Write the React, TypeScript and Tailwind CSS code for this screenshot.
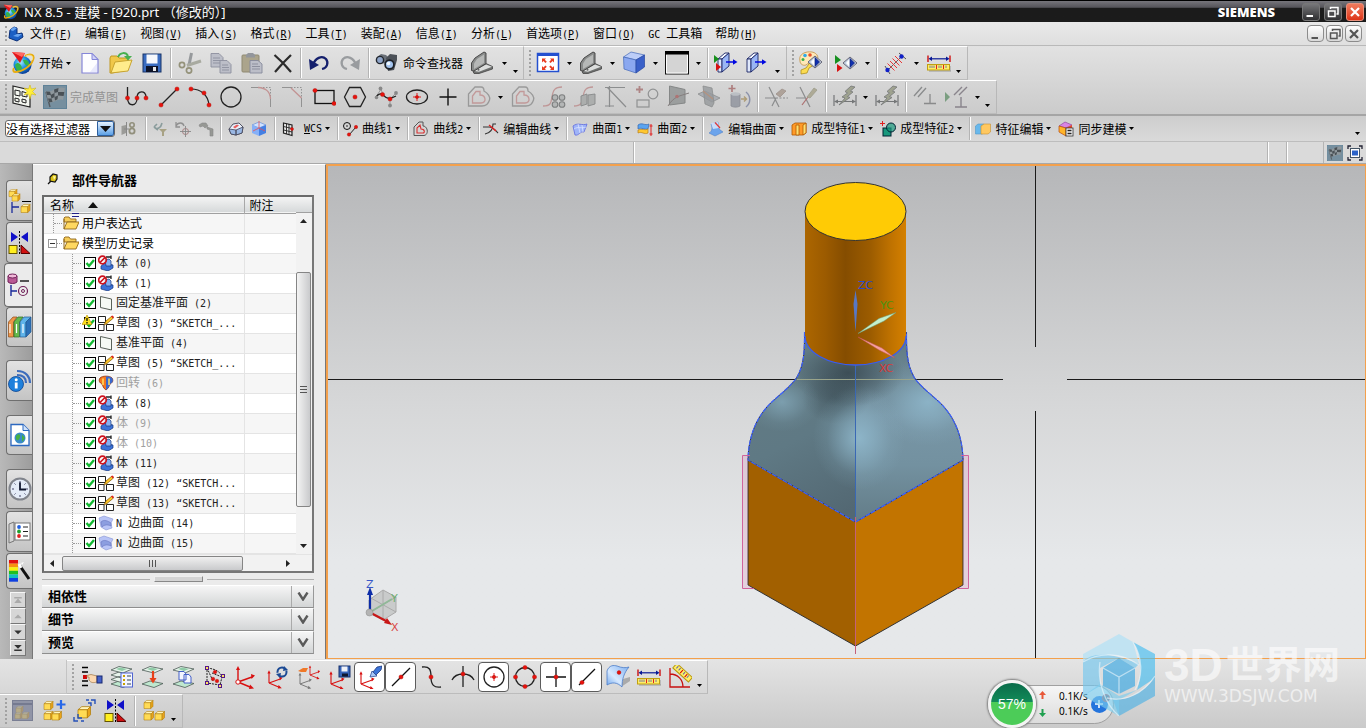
import React from "react";
import type { ReactNode } from "react";

/* ---------- text ---------- */

function Txt({ children }: { children: string }) {
  const parts = children.split(/([\x20-\x7e“]+)/).filter((p) => p !== "");
  return (
    <span className="whitespace-pre">
      {parts.map((p, i) =>
        /^[\x20-\x7e“]+$/.test(p) ? (
          <span key={i} className="font-['DejaVu_Sans_Mono',monospace] text-[10px]">
            {p}
          </span>
        ) : (
          p
        )
      )}
    </span>
  );
}

/* ---------- drawing helpers ---------- */

const R = ({ x, y, r = 2.1 }: { x: number; y: number; r?: number }) => (
  <circle cx={x} cy={y} r={r} fill="#e8120c" stroke="#a80d08" strokeWidth={0.4} />
);

const Cube = ({ x, y, s = 1 }: { x: number; y: number; s?: number }) => (
  <g transform={`translate(${x} ${y}) scale(${s})`} stroke="#b07c08" strokeWidth={0.6} strokeLinejoin="round">
    <path d="M0 3 L3 0.5 H10 L7.5 3 Z" fill="#fff6bc" />
    <path d="M0 3 H7.5 V9.5 H0 Z" fill="#ffdb55" />
    <path d="M7.5 3 L10 0.5 V7 L7.5 9.5 Z" fill="#eaa41a" />
  </g>
);

const Ruler = () => (
  <>
    <path d="M1 4.5 V11 M23 4.5 V11" stroke="#c00" strokeWidth={1.3} />
    <path d="M3 7.8 H21" stroke="#0a1a96" strokeWidth={1.2} />
    <path d="M1.5 7.8 L5 5.5 V10 Z M22.5 7.8 L19 5.5 V10 Z" fill="#0a1a96" />
    <path d="M2 20 H24 V15" stroke="#999" fill="none" />
    <rect x={0.5} y={13.5} width={22} height={5.5} fill="#ffee66" stroke="#c0a010" />
    <path d="M3 14.5 V17 M5 14.5 V17 M7 14.5 V17 M12 14.5 V17 M14 14.5 V17 M19 14.5 V17" stroke="#66a" strokeWidth={0.9} />
    <path d="M9.5 14 V18 M16.5 14 V18" stroke="#e02020" />
  </>
);

const Datum = () => (
  <g strokeLinejoin="round">
    <path d="M3 20.5 L16 12.5 L22.5 15.5 V18 L9 22.5 H4 Z" fill="#6f7170" stroke="#444" strokeWidth={0.8} />
    <path d="M4 20 L16 13.5 L22 15.8 L9 20.8 Z" fill="#dcdedd" />
    <path d="M1.5 19.5 V12 L5 7 L14 1 L16 2 V12.5 L4 20 Z" fill="#8a8c8b" stroke="#3d3d3d" strokeWidth={0.9} />
    <path d="M4 12.5 L7 8 L14 3.5 V12 L4 18 Z" fill="#b6b8b7" />
    <circle cx={8.5} cy={18.8} r={1} fill="#666" />
  </g>
);

const BlueBox = ({ x = 0 }: { x?: number }) => (
  <g transform={`translate(${x} 0)`} stroke="#1a2464" strokeWidth={0.9} strokeLinejoin="round">
    <path d="M1 8 L8 2 H12 L5 8 Z" fill="#f4f8ff" />
    <path d="M1 8 H5 V21 H1 Z" fill="#dfe8fb" />
    <path d="M5 8 L12 2 V15 L5 21 Z" fill="#9ab6f4" />
    <path d="M9 11 H17" stroke="#0008e0" strokeWidth={1.5} />
    <path d="M16 8.3 L20.5 11 L16 13.7 Z" fill="#0008e0" stroke="none" />
  </g>
);

const Axes = ({ x, y, s = 1, c = "#d81010" }: { x: number; y: number; s?: number; c?: string }) => (
  <g transform={`translate(${x} ${y}) scale(${s})`} stroke={c} fill={c} strokeWidth={1.4}>
    <path d="M0 0 V-13 M0 0 L14 -5 M0 0 L12 5" fill="none" />
    <path d="M-2 -12 H2 L0 -16 Z M13 -8 L17 -6.5 L13.5 -3 Z M12 2.5 L16 6.5 L11 7 Z" stroke="none" />
  </g>
);

const Layers = ({ mid }: { mid?: boolean }) => (
  <g stroke="#4d5a55" strokeLinejoin="round" strokeWidth={0.8}>
    <path d="M1 19 L9 16 L22 18.5 L13 22.5 Z" fill="#bfe8cf" />
    {mid && <path d="M1 14.5 L9 11.5 L22 14 L13 18 Z M1 10 L9 7 L22 9.5 L13 13.5 Z" fill="#e8f4ec" />}
    <path d="M1 5 L9 1.5 L22 4 L13 8 Z" fill="#e5f4ea" />
    <path d="M6 4 L10 2.5 L17 4 L12 6 Z" fill="#8fcba6" stroke="none" />
  </g>
);

const Mirror = () => (
  <>
    <path d="M3 1 L10 6 L3 11 Z M20 1 L13 6 L20 11 Z" fill="#1010c8" />
    <path d="M11.5 0 V24" stroke="#000" strokeDasharray="2 1.5" />
    <rect x={1} y={14.5} width={8} height={8} fill="#ffef20" stroke="#665500" />
    <path d="M13 14 L22 22.5 H13 Z" fill="#d01010" stroke="#500" />
  </>
);

const Flag = () => (
  <>
    <rect x={0.5} y={0.5} width={23} height={23} fill="#768f9f" stroke="#5f8298" />
    <path d="M3 7 L7 22" stroke="#555b60" strokeWidth={1.4} />
    <path d="M2.5 6 C8 9 13 0 22 3 L20 15 C14 13 11 19 5.5 17 Z" fill="#8e979c" />
    <path d="M3 6.5 L7 6.8 L8 10 L4 10 Z M11 4.5 L15.5 3 L15 7 L11.5 8 Z M7.500 10 L11.500 8 L11.500 12 L8.500 13.500 Z M15 7 L21.300 7 L20.600 11 L15 10.500 Z M5 13.500 L8.500 13.500 L9.500 17 L6 17.200 Z M11.500 12 L15 10.500 L14.500 14.300 L12 15.500 Z" fill="#4a5156" />
  </>
);

const Nx = () => (
  <>
    <defs>
      <radialGradient id="nxGlobe" cx="40%" cy="35%" r="70%">
        <stop offset="0" stopColor="#9be8ff" />
        <stop offset="0.5" stopColor="#1c8fe0" />
        <stop offset="1" stopColor="#07308c" />
      </radialGradient>
    </defs>
    <circle cx={11.5} cy={14} r={9} fill="url(#nxGlobe)" />
    <path d="M4 14 C7 10 10 13 11 17 C9 21 7 22 6 20 Z M12 9 C16 8 19 11 18 15 C15 15 13 13 12 9 Z" fill="#35b34a" />
    <path d="M1 1 L14 2 L9 12 Z" fill="#e3161c" />
    <path d="M1 1 L14 2 L11 6 Z" fill="#ff6a62" />
    <path d="M14 5 C20 2 24 4 22 9 C20 15 11 21 4 21 C2 21 2 19 3 17" fill="none" stroke="#e7ac12" strokeWidth={2} />
    <path d="M15 5 C20 3 23 5 21 9" fill="none" stroke="#fff2a0" strokeWidth={0.8} />
  </>
);

const Constraint = () => (
  <g stroke="#66686a" fill="none" strokeWidth={1.2}>
    <path d="M1 10 V21 M23 10 V21 M2 16.500 H22" />
    <path d="M1 16.500 L5 14.500 V18.500 Z M23 16.500 L19 14.500 V18.500 Z" fill="#66686a" stroke="none" />
    <path d="M18 1 L12 6.500 L14.500 8 L9 12 L12 13 L6 20 L17 12.500 L14.500 11.500 L20 7 L17.500 6 L22 2 Z" fill="#969a84" strokeWidth={0.8} />
  </g>
);

const DiamondEye = ({ x, y }: { x: number; y: number }) => (
  <g transform={`translate(${x} ${y})`}>
    <path d="M0 7 L7 1 L14 7 L7 13 Z" fill="#c4d0e0" stroke="#667" />
    <path d="M3 7 L7 2.5 V11.5 Z" fill="#fff" />
    <path d="M7 2.5 L11.5 7 L7 11.5 Z" fill="#1030b0" stroke="#0a1c70" strokeWidth={0.7} />
  </g>
);

const art: Record<string, ReactNode> = {
  nx: <Nx />,
  newDoc: (
    <>
      <path d="M4 2.5 H14 L20 8.5 V22 H4 Z" fill="#fdfdff" stroke="#8586d8" strokeWidth={1.2} />
      <path d="M14 2.5 V8.5 H20 Z" fill="#d0d2f6" stroke="#8586d8" />
      <path d="M12 21 H19 V12 Z" fill="#e8e9fc" />
    </>
  ),
  open: (
    <>
      <path d="M1 7 L2 5 H8 L10 7 H19 V19 L3 22 H1 Z" fill="#f0c84a" stroke="#c09820" />
      <path d="M2 22 L6 11 L23 9 L19 20 Z" fill="#ffec8c" stroke="#c8a430" />
      <path d="M9 6 C11 1 17 1 19 5" fill="none" stroke="#48b050" strokeWidth={2} />
      <path d="M15 5 H23 L19 9.500 Z" fill="#48b050" />
    </>
  ),
  save: (
    <>
      <rect x={3} y={3} width={18} height={18} fill="#3a6cc0" stroke="#183468" />
      <rect x={6.5} y={3.5} width={11} height={9} fill="#f6f8fc" />
      <rect x={6} y={15} width={12} height={6} fill="#0d1328" />
      <rect x={13} y={16} width={3} height={4} fill="#e8e8e8" />
    </>
  ),
  cut: (
    <g fill="none">
      <path d="M13.500 2 L11 14" stroke="#96999c" strokeWidth={3} />
      <path d="M23 10 L9 14.500" stroke="#a8aaa0" strokeWidth={3} />
      <circle cx={4} cy={14} r={2.600} stroke="#94927a" strokeWidth={1.700} />
      <circle cx={11} cy={19.5} r={2.600} stroke="#94927a" strokeWidth={1.700} />
    </g>
  ),
  copy: (
    <g fill="#bcbec8" stroke="#8d909e" strokeWidth={0.9}>
      <path d="M2 2.5 H10 L14 6.5 V16 H2 Z" />
      <path d="M4 7 H11 M4 9.5 H11 M4 12 H11" />
      <path d="M11 9.5 H18 L22 13.5 V22 H11 Z" />
      <path d="M13 14 H19 M13 16.5 H20 M13 19 H20" />
    </g>
  ),
  paste: (
    <>
      <rect x={2} y={4} width={17} height={17} rx={1} fill="#aba48c" stroke="#8f8972" />
      <path d="M6 6.5 V4 L8 2 H13 L15 4 V6.5 Z" fill="#93969c" />
      <path d="M10 9.5 H18 L22 13 V22 H10 Z" fill="#bcbec8" stroke="#878a9c" strokeWidth={0.9} />
      <path d="M12 13 H18 M12 15.5 H20 M12 18 H20" stroke="#8d909e" />
    </>
  ),
  del: <path d="M3.500 4 L12 12 L20 21 M20 4 L12 12 L4 21" stroke="#2b2b2b" strokeWidth={2.2} fill="none" />,
  undo: (
    <>
      <path d="M6 14 C8 7 15 4 19 8 C22 12 20 17 15 18" fill="none" stroke="#141f6c" strokeWidth={2.2} />
      <path d="M2 8 L3 19 L12 14 Z" fill="#141f6c" />
    </>
  ),
  redo: (
    <>
      <path d="M18 14 C16 7 9 4 5 8 C2 12 4 17 9 18" fill="none" stroke="#999c9f" strokeWidth={2.2} />
      <path d="M22 8 L21 19 L12 14 Z" fill="#999c9f" />
    </>
  ),
  finder: (
    <>
      <path d="M1 7 L6 3 L11 4 L14 7 L12 12 L4 13 Z" fill="#6a7078" />
      <path d="M11 7 L15 3 L22 4 L22 9 L19 19 L13 20 Z" fill="#4c5158" />
      <circle cx={5} cy={9} r={3.6} fill="#8ea4c8" stroke="#22262c" strokeWidth={1.4} />
      <circle cx={14.5} cy={13.500} r={4.4} fill="#a4c4ee" stroke="#1c2026" strokeWidth={1.7} />
      <circle cx={13.5} cy={12.500} r={1.8} fill="#f0f8ff" />
    </>
  ),
  datum: <Datum />,
  fit: (
    <>
      <rect x={1.5} y={2.5} width={21} height={18} fill="#fff" stroke="#2450d0" strokeWidth={1.5} />
      <rect x={1} y={2} width={22} height={3} fill="#2450d0" />
      <g fill="#e83c20">
        <path d="M6 7.500 H10 L8.800 8.700 L10.800 10.700 L9.400 12 L7.400 10 L6 11.500 Z" />
        <path d="M18 7.500 H14 L15.200 8.700 L13.200 10.700 L14.600 12 L16.600 10 L18 11.500 Z" />
        <path d="M6 19 H10 L8.800 17.800 L10.800 15.800 L9.400 14.500 L7.400 16.500 L6 15 Z" />
        <path d="M18 19 H14 L15.200 17.800 L13.200 15.800 L14.600 14.500 L16.600 16.500 L18 15 Z" />
      </g>
    </>
  ),
  cube: (
    <g strokeLinejoin="round">
      <path d="M1.500 6 L9 1 L22.500 4 L14 9 Z" fill="#bccdf8" stroke="#4468b8" strokeWidth={0.700} />
      <path d="M1.500 6 L14 9 V22 L2 18 Z" fill="#8ba8f0" stroke="#4468b8" strokeWidth={0.700} />
      <path d="M14 9 L22.500 4 V16 L14 22 Z" fill="#3a60c8" stroke="#2848a0" strokeWidth={0.700} />
    </g>
  ),
  square: (
    <>
      <rect x={0.5} y={1} width={23} height={22} fill="#d4d4d4" stroke="#111" />
      <rect x={0} y={0} width={24} height={3.5} fill="#000" />
      <path d="M1.5 4 V22 H22.5 V4" stroke="#fff" fill="none" />
    </>
  ),
  boxMark: (
    <>
      <BlueBox x={3} />
      <path d="M0 4 L5 8 L0 12 Z" fill="#18901c" />
      <path d="M2 12 L7 16 L2 20 Z" fill="#d81010" />
    </>
  ),
  box: <BlueBox x={1} />,
  palette: (
    <>
      <path d="M2 10 C0 3 8 0 14 1 C20 2 22 8 17 11 C13 13 11 11 8 14 C5 15 2 13 2 10 Z" fill="#ffe8b8" stroke="#c89850" strokeWidth={0.900} />
      <circle cx={7} cy={4.5} r={1.8} fill="#2fa8e8" />
      <circle cx={12} cy={4} r={1.8} fill="#e85028" />
      <circle cx={5} cy={8.5} r={1.5} fill="#3ab04a" />
      <path d="M13 10 L8 17 L3 19 V23 L9 22 L11 17 L16 14 Z" fill="#fcdc50" stroke="#b09020" strokeWidth={0.800} />
      <DiamondEye x={10} y={4} />
    </>
  ),
  eye: (
    <>
      <path d="M1 4 L7 9 L1 13 Z" fill="#189020" />
      <path d="M3 13 L8.5 17 L3 21 Z" fill="#d81010" />
      <DiamondEye x={9} y={5} />
    </>
  ),
  measureCurve: (
    <>
      <path d="M4 20 L20 4" stroke="#444" strokeWidth={0.8} />
      <path d="M4.500 12.500 L11.500 19.500 M7 10 L14 17 M9.500 7.500 L16.500 14.500 M12 5 L19 12" stroke="#e83838" strokeWidth={1} />
      <path d="M2 15 L7 23 M16 2 L23 8" stroke="#444" strokeWidth={0.9} />
      <circle cx={4.500} cy={19} r={2.2} fill="#1020c8" />
      <circle cx={18.5} cy={5.5} r={2.2} fill="#1020c8" />
    </>
  ),
  ruler: <Ruler />,

  sketch: (
    <>
      <path d="M1 1 L18 5 V22 L1 18 Z" fill="#f4f6f0" stroke="#222" strokeWidth={1.2} />
      <path d="M3 5 L8 6 V11 L3 10 Z M10 6.5 L15 8 V12 L10 11 Z M3 13 L7 14 V17 L3 16 Z M10 14 L14 15 V18 L10 17 Z" fill="none" stroke="#222" />
      <path d="M18 0 L19.3 4 L24 3 L20.5 6.5 L24 10 L19.5 9 L18 14 L16.5 9 L12 10 L15 6.5 L12 3 L16.5 4 Z" fill="#ffee3a" stroke="#c8b010" strokeWidth={0.5} />
    </>
  ),
  flag: <Flag />,
  profile: (
    <>
      <path d="M2.500 2 V13 C3 22 12 22 12 13 C12 5 21 5 21 12 V13" stroke="#222" fill="none" strokeWidth={1.3} />
      <R x={2.5} y={13} /><R x={12} y={13} /><R x={21} y={13} />
    </>
  ),
  line: (<><path d="M4 20 L20 4" stroke="#222" strokeWidth={1.2} /><R x={4} y={20} /><R x={20} y={4} /></>),
  arc: (<><path d="M3 4 C13 4 20 10 21 20" stroke="#222" fill="none" strokeWidth={1.2} /><R x={3} y={4} /><R x={16} y={8} /><R x={21} y={20} /></>),
  circle: <circle cx={12} cy={12} r={10} fill="none" stroke="#222" strokeWidth={1.3} />,
  fillet: (<><path d="M10 2.500 H20.500 V12" stroke="#888" fill="none" strokeDasharray="1.5 1.5" /><path d="M1 2.500 H10 M20.500 12 V22" stroke="#888" /><path d="M8 2.500 C16 3 20 6 20.500 14" stroke="#c08888" fill="none" strokeWidth={1.3} /></>),
  chamfer: (<><path d="M10 2.500 H20.500 V13" stroke="#888" fill="none" strokeDasharray="1.5 1.5" /><path d="M1 2.500 H10 M20.500 13 V22" stroke="#888" /><path d="M10 3 L20.500 13" stroke="#c08888" strokeWidth={1.3} /></>),
  rect: (<><rect x={3} y={5.500} width={19} height={13} fill="none" stroke="#111" strokeWidth={1.3} /><R x={3} y={5.500} /><R x={22} y={18.500} /></>),
  hex: (<><path d="M1.500 12 L6.5 2.5 H17.5 L22.500 12 L17.5 21.5 H6.5 Z" fill="none" stroke="#222" strokeWidth={1.3} /><R x={12} y={12} /></>),
  spline: (
    <>
      <path d="M2 12 L7 4 L9 10 M16 14 L22 8 M16 14 V21" stroke="#999" fill="none" />
      <path d="M2 12 C4 9 7 8 9 10 C12 13 15 15 22 11" fill="none" stroke="#222" strokeWidth={1.2} />
      <circle cx={6.5} cy={3.5} r={1.9} fill="#888" /><circle cx={2.5} cy={12.5} r={1.8} fill="#888" /><circle cx={22} cy={8} r={1.9} fill="#888" /><circle cx={16} cy={20.5} r={1.9} fill="#888" />
      <R x={8.500} y={9.500} /><R x={16} y={14} />
    </>
  ),
  ellipse: (<><ellipse cx={12} cy={12} rx={10.5} ry={7} fill="none" stroke="#222" strokeWidth={1.3} /><path d="M12 8 V16 M8 12 H16" stroke="#e02020" /><R x={12} y={12} r={1.6} /></>),
  plus: <path d="M12 3.500 V20.500 M3.500 12 H20.500" stroke="#111" strokeWidth={1.4} />,
  offset: (
    <g fill="none" strokeWidth={1.3}>
      <path d="M1.5 21 V9 L8 2 H14 C17 2 17 4 17 6 C21 8 23.500 12 22.500 15 C21 20 18 21 15 21 Z" stroke="#909090" />
      <path d="M5.500 18 V11 L9 6.500 H13 V10 C19 10 20 18 14 18 Z" stroke="#c09090" />
    </g>
  ),
  pattern: (
    <g fill="#b0b2b2" stroke="#6f7172" strokeWidth={1.1}>
      <path d="M1 21 C9 21 9 18 10 12 C11 5 13 2 20 2" fill="none" stroke="#bd8d8d" strokeWidth={1.300} />
      <circle cx={13} cy={12.500} r={2.8} /><circle cx={20} cy={12.500} r={2.8} /><circle cx={13} cy={19.500} r={2.8} /><circle cx={20} cy={19.500} r={2.8} />
    </g>
  ),
  mirrorCurve: (
    <g fill="#a6a9a8" stroke="#7a7d7e" strokeWidth={0.900}>
      <path d="M1 21 C8 21 9 18 10 12 C11 5 13 2 20 2" fill="none" stroke="#bd8d8d" strokeWidth={1.3} />
      <path d="M8 11 L14 9 V19 L8 21 Z M15 10 L22 9 V19 L15 21 Z" />
    </g>
  ),
  intersect: <path d="M1 2.500 H21 M5.500 1 V22 M1 21 H10 M3.500 2.500 L22 22" fill="none" stroke="#808283" strokeWidth={1.2} />,
  derive: (
    <g fill="none" strokeWidth={1.2} stroke="#858788">
      <path d="M4.500 1 V8 M1 4.5 H8" stroke="#a87878" strokeWidth={1.8} />
      <circle cx={18} cy={9} r={4.8} /><rect x={2} y={15} width={12} height={7} />
    </g>
  ),
  plane: (<><path d="M3.500 1 L19 4.500 V18 L3.500 20 Z" fill="#939696" stroke="#787b7b" /><path d="M2 21 C8 11 14 11 23 8" stroke="#787070" fill="none" strokeWidth={1} /><circle cx={11} cy={11.5} r={1.800} fill="#a86464" /></>),
  planes: (<g stroke="#808383" strokeWidth={0.8}><path d="M1 9 L8 6 L23 13 L15 17 Z" fill="#a6aab0" /><path d="M6 1 L15 3 L17 18 L15 22 L8 19 Z" fill="#8c9094" fillOpacity={0.800} /><path d="M6 6 L16 14" stroke="#b08870" strokeWidth={1.3} /></g>),
  project: (
    <g>
      <path d="M4 0 V7 M0.500 3.500 H7.500" stroke="#a87070" strokeWidth={1.700} />
      <path d="M3 9 H12 V21 C10 22.500 5 22.500 3 21 Z" fill="#9296a0" stroke="#80838c" strokeWidth={0.800} />
      <ellipse cx={7.500} cy={9} rx={4.500} ry={1.800} fill="#b8bcc2" />
      <path d="M13 14 H18 M16 11.500 L18.500 14 L16 16.500" stroke="#a89468" fill="none" strokeWidth={1.4} /><path d="M18 7 C23 11 23 18 18 22" fill="none" stroke="#8088a4" strokeWidth={1.5} />
    </g>
  ),
  trim: (<g stroke="#808283" strokeWidth={1.2}><path d="M1 13 H12 M5 2 L15 22 M8 21 L12 13" fill="none" /><path d="M12 13 H24" strokeDasharray="2 1.5" /><path d="M12 9 L18 4 L22 6 L16 12 Z" fill="#a89a90" stroke="#968880" strokeWidth={0.8} /></g>),
  extend: (<g stroke="#808283" strokeWidth={1.2}><path d="M1 13 H11 M5 2 L15 22" fill="none" /><path d="M7 20 L13 12" stroke="#a86060" /><path d="M12 12 L19 3 L22 5 L15 13 Z" fill="#a8a48c" stroke="#949480" strokeWidth={0.8} /></g>),
  constraint: <Constraint />,
  parallel: <path d="M1 11 L9 2 M5 12 L13 3 M11 18.500 H23 M17 18.500 V9" stroke="#7d7f80" strokeWidth={1.3} />,
  parallelAuto: (<><path d="M1 7 L6 12 L1 17 Z" fill="#6d9674" /><path d="M10 10 L18 2 M15 10 L23 2 M11 22 H23 M17 22 V12" stroke="#7d7780" strokeWidth={1.4} /></>),

  wcsList: (
    <>
      <path d="M3 2.5 H9 M3 7 H9 M3 16 H9 M3 20.5 H9" stroke="#000" strokeWidth={1.700} />
      <rect x={4} y={10} width={4} height={4} fill="#d00808" />
      <path d="M8 10.500 L12 9.5 L18 11 V17 C14 18 12 18 10 15 V12 H8 Z" fill="#fcd8b0" stroke="#a88050" strokeWidth={0.8} />
      <rect x={18} y={11} width={5} height={7} fill="#4460c8" stroke="#182870" />
    </>
  ),
  layerList: (<><Layers mid /><rect x={11} y={8} width={11.5} height={14} fill="#f4f6ff" stroke="#5064d0" /><path d="M13 11 H15 M13 15 H15 M13 19 H15" stroke="#c8a000" strokeWidth={2} /><path d="M17 11 H21 M17 15 H21 M17 19 H21" stroke="#345" /></>),
  layerMove: (<><Layers /><path d="M12 6 V15" stroke="#e84018" strokeWidth={2.2} /><path d="M8.5 13 H15.5 L12 18.5 Z" fill="#e84018" /></>),
  layerCopy: (<><Layers /><path d="M7 6.5 H12 L14 9 V15 H7 Z M12 9.5 H17 L19 12 V18 H12 Z" fill="#f4f6ff" stroke="#4460c8" /></>),
  transform: (
    <>
      <path d="M4 3 C14 4 18 8 19 12 L17 20 L4 18 Z M4 3 L10 16 M19 12 L9 8" fill="none" stroke="#222" strokeDasharray="2 1" />
      {[[4, 3], [20, 11], [4, 18], [17, 21]].map(([a, b]) => <rect key={`${a}-${b}`} x={a - 1.5} y={b - 1.5} width={3} height={3} fill="#ffe060" stroke="#551888" />)}
      <R x={12} y={7} r={1.8} /><R x={10} y={14} r={1.8} /><R x={14} y={16} r={1.8} />
    </>
  ),
  csys: (<><Axes x={4} y={17} /><circle cx={4} cy={17} r={2.2} fill="#fff" stroke="#d81010" /></>),
  csysRotate: (<><Axes x={4} y={18} s={0.8} /><circle cx={17} cy={7} r={4.5} fill="none" stroke="#1c4a94" strokeWidth={2} strokeDasharray="10 3" /><path d="M19 1 L23 5 L18 6 Z M15 13 L11 9 L16 8 Z" fill="#1c4a94" /></>),
  csysOrient: (<><Axes x={4} y={19} s={0.7} c="#777" /><Axes x={14} y={10} s={0.6} /><path d="M2 6 L7 3 H12 L10 7 H5 Z" fill="#f07828" /></>),
  csysSave: (<><Axes x={4} y={19} s={0.8} /><rect x={12} y={1} width={11} height={11} fill="#3764b8" stroke="#16306c" /><rect x={14.5} y={1.5} width={6} height={5} fill="#f0f2f8" /><rect x={15} y={8.5} width={6} height={3} fill="#101830" /></>),
  csysLight: (<><Axes x={3} y={19} s={0.8} /><path d="M15 7 L19 2 L24 1 L23 5 L18 10 Z" fill="#3c74d8" stroke="#102a70" strokeWidth={0.700} /><path d="M14 6 L19 11 L12 12 Z" fill="#a8c8f8" stroke="#203c88" strokeWidth={0.700} /></>),
  midLine: (<><path d="M3 21 L21 3" stroke="#111" strokeWidth={1.3} /><R x={12} y={12} /></>),
  ctrl: (<><path d="M2 2 C10 1 11 5 11 12 C11 20 14 23 21 22" fill="none" stroke="#222" strokeWidth={1.3} /><R x={11} y={12} /></>),
  tangent: (<><path d="M1 15 C5 7 19 7 23 15 M12 1 V22" fill="none" stroke="#222" strokeWidth={1.3} /><R x={12} y={9} /></>),
  center: (<><circle cx={12} cy={12} r={10} fill="none" stroke="#222" strokeWidth={1.3} /><path d="M12 8 V16 M8 12 H16" stroke="#e02020" /><R x={12} y={12} r={1.7} /></>),
  quadrant: (<><circle cx={12} cy={12} r={9.5} fill="none" stroke="#222" strokeWidth={1.3} /><R x={12} y={2.5} /><R x={12} y={21.5} /><R x={2.5} y={12} /><R x={21.5} y={12} /></>),
  point: (<><path d="M12 2 V22 M2 12 H22" stroke="#111" strokeWidth={1.3} /><R x={12} y={12} /></>),
  onCurve: (<><path d="M4 20 L20 4" stroke="#111" strokeWidth={1.3} /><R x={7} y={17.5} /></>),
  onFace: (
    <>
      <defs><linearGradient id="face" x1="0" x2="1" y1="1" y2="0"><stop offset="0" stopColor="#6ca4ec" /><stop offset="0.4" stopColor="#d8eaff" /><stop offset="1" stopColor="#80b0f0" /></linearGradient></defs>
      <path d="M15 22 L24 16 V12 L17 14 Z" fill="#aaa" />
      <path d="M1 6 C3 0 8 0 11 1 C16 3 20 3 23 2 C18 8 16 14 16 22 C11 17 6 17 1 20 Z" fill="url(#face)" stroke="#4c7cc8" strokeWidth={0.8} />
      <R x={13} y={7.500} r={1.900} />
    </>
  ),
  angle: (
    <>
      <path d="M2 3 V22 H22 M2 9 C10 9 15 15 15 22" fill="none" stroke="#c81010" strokeWidth={1.3} />
      <g transform="rotate(42 15 8)"><rect x={4} y={5} width={21} height={6} fill="#ffee66" stroke="#b89810" /><path d="M7 6 V9 M10 6 V9 M16 6 V9 M21 6 V9" stroke="#66a" /><path d="M13 6 V10 M19 6 V10" stroke="#d00" /></g>
    </>
  ),
  asmWin: (<><rect x={1.5} y={1.5} width={20} height={20} fill="#9094a6" stroke="#7a7f94" /><path d="M2 5 H21" stroke="#757a90" strokeWidth={2} /><g opacity={0.35}><Cube x={5} y={7} s={0.7} /><Cube x={4} y={13} s={0.7} /><Cube x={11} y={13} s={0.7} /></g></>),
  asmAdd: (<><Cube x={2} y={2} s={0.9} /><Cube x={2} y={12} s={0.9} /><Cube x={10} y={12} s={0.95} /><path d="M19 1 V10 M14.5 5.5 H23.5" stroke="#2868e8" strokeWidth={2.2} /></>),
  asmMove: (<><Cube x={5} y={7} s={1.25} /><path d="M15 4 L18 4 V7 M18 1 H22 V5 M13 1 H16 M1 18 V22 H5 M5 15 V19 H9 M8 22 H11" fill="none" stroke="#2450b8" strokeWidth={1.4} /></>),
  mirror: <Mirror />,
  asm: (<><Cube x={2} y={1} s={0.9} /><Cube x={2} y={12} s={0.95} /><Cube x={13} y={12} s={0.95} /></>),
  asmTree: (<><Cube x={1} y={0} s={0.8} /><Cube x={4} y={4.5} s={0.8} /><path d="M4 13 V24 M4 18 H11" stroke="#1a2a9a" strokeWidth={1.3} /><path d="M14 12.500 H23" stroke="#000" /><Cube x={13} y={15} s={0.9} /></>),
  partTree: (
    <>
      <path d="M1 3 V9 C3 11 8 11 10 9 V3" fill="#b85894" stroke="#702058" /><ellipse cx={5.5} cy={3} rx={4.5} ry={2} fill="#f0b8d8" stroke="#702058" />
      <path d="M13 8 H22" stroke="#000" strokeWidth={1.3} /><path d="M4 12 V23 M4 18 H10" stroke="#1a2a9a" strokeWidth={1.4} />
      <circle cx={16} cy={18} r={4.5} fill="none" stroke="#702058" strokeWidth={1.2} /><circle cx={16} cy={18} r={1.5} fill="none" stroke="#702058" />
    </>
  ),
  books: (
    <g strokeWidth={0.7}>
      <path d="M0.500 7 L5 2 H9 L5.500 7 V22 H0.500 Z" fill="#ee9648" stroke="#8c4a18" /><path d="M6 7 L10 2 H15 L11.500 7 V22 H6 Z" fill="#66b84c" stroke="#2c6c20" /><path d="M12 7 L16 2 H23 L18 7 V22 H12 Z" fill="#60b4ea" stroke="#225a90" /><path d="M18 7 L23 2 V17 L18 22 Z" fill="#2c70b8" stroke="#225a90" /><path d="M2 9 V18 M8.500 9 V18 M15 9 V18" stroke="#fff" strokeWidth={1.200} />
    </g>
  ),
  info: (
    <>
      <path d="M9 6 C15 6 18 9 18 14 M9 2 C18 2 22 8 22 14" fill="none" stroke="#3c6cbc" strokeWidth={2.2} />
      <circle cx={8} cy={15} r={7.5} fill="#1e80dc" stroke="#0c4490" strokeWidth={0.800} /><rect x={6.8} y={13.5} width={2.8} height={6} fill="#fff" /><circle cx={8.2} cy={10.8} r={1.5} fill="#fff" />
    </>
  ),
  web: (<><path d="M3 1.5 H15 L21 7.5 V22.5 H3 Z" fill="#fff" stroke="#2c68c0" strokeWidth={1.3} /><path d="M15 1.5 V7.5 H21" fill="#d0e2fa" stroke="#2c68c0" /><circle cx={12} cy={15} r={5.5} fill="#3a8ac8" /><path d="M8 13 C10 10 13 11 12 14 C11 18 9 18 8 16 Z M14 11.500 L17 15 L14 19 Z" fill="#45b044" /></>),
  clock: (<><circle cx={12} cy={12} r={10.5} fill="#e4ecf8" stroke="#80848c" strokeWidth={2} /><path d="M12 4 V6 M12 18 V20 M4 12 H6 M18 12 H20 M6.5 6.5 L7.5 7.5 M17.5 6.5 L16.5 7.5 M6.5 17.5 L7.5 16.5 M17.5 17.5 L16.5 16.5" stroke="#446" /><path d="M12 5.5 V12.5 H18" fill="none" stroke="#101830" strokeWidth={1.8} /></>),
  roles: (<><path d="M1 4 L6 2 V21 L1 23 Z" fill="#d4d4d4" stroke="#777" /><rect x={7} y={3} width={15} height={17} fill="#fff" stroke="#777" /><circle cx={11} cy={7} r={1.9} fill="#2060e0" /><circle cx={11} cy={11.5} r={1.9} fill="#20a030" /><circle cx={11} cy={16} r={1.9} fill="#e02020" /><path d="M15 7 H20 M15 11.5 H20 M15 16 H20" stroke="#222" /></>),
  wand: (
    <>
      {["#e01010", "#f89010", "#f8f010", "#20c020", "#10c0c0", "#1040e0"].map((c, i) => <rect key={c} x={1} y={1 + i * 3.6} width={9} height={3.7} fill={c} />)}
      <path d="M12 7 L21 20" stroke="#111" strokeWidth={3} /><path d="M11 5 L13 9" stroke="#fff" strokeWidth={3} /><path d="M12 1 L13 4 L16 3 L14 6 Z" fill="#fff" />
    </>
  ),
};

/* 16 px pictures */
const small: Record<string, ReactNode> = {
  cubeApp: (<><path d="M2 4 L6 1 L9 2 V8 L14 7 L15 11 L9 15 L1 12 Z" fill="#1b5fc4" stroke="#0a2f78" /><path d="M2 4 L6 1 L9 2 L5 5 Z M5 10 L9 8 L14 8 L10 11 Z" fill="#6ba6f0" /></>),
  filterChain: (<g><path d="M0.500 5 L5 4 V12 L0.500 14 Z" fill="#9b9b98" /><path d="M5.500 1 V15 M3 8 H8" stroke="#888" /><circle cx={11} cy={4} r={2.2} fill="none" stroke="#918f7c" strokeWidth={1.6} /><circle cx={11} cy={10} r={2.600} fill="none" stroke="#918f7c" strokeWidth={1.8} /></g>),
  filter1: (<><path d="M2 6 C5 9 9 7 10 2 M2 6 L6 9 M2 6 L5 3" stroke="#8a9c9c" strokeWidth={1.6} fill="none" /><path d="M7 8 H15 L12 11 V15 H10 V11 Z" fill="#a8a284" /></>),
  filter2: (<><path d="M1 5 C3 1 8 1 9 5 M1 1 V6 H5" stroke="#909090" strokeWidth={1.3} fill="none" /><circle cx={10.5} cy={10.5} r={3} fill="none" stroke="#a88080" /><path d="M10.5 5 V16 M5 10.5 H16" stroke="#888" strokeWidth={0.9} /></>),
  filter3: (<path d="M1 4 L4 2 L8 2 L10 5 L7 7 L5 5 L2 6 Z M9 6 L15 8 V15 L12 15 V9 L9 8 Z" fill="#969894" stroke="#888" strokeWidth={0.6} />),
  eraserBox: (<><path d="M1 8 L5 3 L11 2 L15 6 L14 12 L8 14 L3 13 Z" fill="#e8f0fa" stroke="#445" strokeWidth={0.9} /><path d="M1 8 L8 9 L8 14 L3 13 Z M8 9 L15 6 L14 12 L8 14 Z" fill="#9ab8e4" stroke="#445" strokeWidth={0.8} /><path d="M5 6 L9 3.500 L11 4.500 L7 7.500 Z" fill="#e86060" /></>),
  solidBox: (<><path d="M1 4 L8 1 L15 4 L8 7 Z" fill="#cfe2ff" stroke="#6890d8" strokeWidth={0.7} /><path d="M1 4 L8 7 V15 L1 12 Z" fill="#86b0f8" /><path d="M8 7 L15 4 V12 L8 15 Z" fill="#4480e4" /><path d="M8 0 V7 L14 10 M8 7 L2 10" stroke="#e85050" fill="none" strokeWidth={0.8} /></>),
  wcs: (<><path d="M2.500 2 L11 4 V14.500 L2.500 12 Z" fill="#e8e8e8" stroke="#222" strokeWidth={1.2} /><path d="M5.500 2.500 V13 M8 3 V14 M2.500 5.500 L11 7.500 M2.500 9 L11 11" stroke="#222" strokeWidth={0.9} /><R x={11} y={8} r={1.5} /></>),
  curve: (<><circle cx={5} cy={5} r={3.5} fill="none" stroke="#111" /><circle cx={5} cy={5} r={0.8} fill="#111" /><path d="M7 14 L14 6" stroke="#222" /><R x={7} y={13.5} r={1.7} /><R x={14} y={6} r={1.7} /></>),
  offset2: (<g fill="none"><path d="M1 14.500 V6 L6 1 H10 V5 C15 5 16 14 11 14.500 Z" stroke="#555" /><path d="M4 12 V7 L7 4 L8 8 C12 8 12 12 10 12 Z" stroke="#d83030" strokeWidth={1.1} /></g>),
  editCurve: (<><path d="M0 6 H6 C10 6 12 9 15 12 M2 13 C7 12 10 8 10 3 H13" fill="none" stroke="#333" strokeWidth={1.1} /><path d="M6 4 L13 10" stroke="#e02020" strokeWidth={1.4} /></>),
  surface: (<><path d="M1 5 C6 1 10 5 15 3 L12 11 C8 10 7 15 3 14 Z" fill="#9fb4f8" stroke="#6874e0" strokeWidth={0.9} /><path d="M2 8 C6 5 10 8 14 6 M6 3 L8 12 M10 4 L11 11" fill="none" stroke="#dce4ff" strokeWidth={0.8} /></>),
  surface2: (<><path d="M1 4 C5 1 8 5 12 3 L11 8 C7 9 5 6 1 8 Z" fill="#5aa4f0" stroke="#3868b0" strokeWidth={0.7} /><path d="M1 9 C5 7 8 10 11 8 L11 12 C7 14 5 10 1 12 Z" fill="#ffc830" stroke="#b88020" strokeWidth={0.7} /><path d="M14 3 V15 M12.500 5 H15.500 M12.500 13 H15.500" stroke="#e02020" /></>),
  editSurface: (<><path d="M3 3 L10 1 L11 8 L15 11 L7 15 L1 12 C5 10 4 6 3 3 Z" fill="#6ca4ec" stroke="#4878c0" strokeWidth={0.5} /><path d="M3 2 L10 1 L11 7 L5 8 Z" fill="#c8dcf8" /><path d="M7 1.500 L12 7" stroke="#e03838" strokeWidth={1.2} /></>),
  form1: (<g stroke="#b05800" strokeWidth={0.8}><path d="M1 4 L4 2 H15 V12 L12 14 H1 Z" fill="#ff9a28" /><path d="M5 4 V14 H8 V4 Z M12 4 V14 L15 12 V2 Z" fill="#ffe070" /></g>),
  form2: (<><rect x={3} y={7} width={8} height={8} fill="#18987c" stroke="#023" /><circle cx={11} cy={6.5} r={4.5} fill="#18987c" fillOpacity={0.7} stroke="#023" /><path d="M2.5 0 V5 M0 2.5 H5" stroke="#e02020" /></>),
  featEdit: (<><path d="M0.500 5 L3 3 H9 V12 L7 13 H0.500 Z" fill="#68b8ec" stroke="#5098c8" strokeWidth={0.6} /><path d="M6 5 L9 3 H15.500 V11 L13 13 H6 Z" fill="#ffc860" stroke="#c89030" strokeWidth={0.6} /></>),
  sync: (<><path d="M1 5 L7 1 L14 4 L8 7 Z" fill="#d884e4" stroke="#9048a0" strokeWidth={0.7} /><path d="M1 5 L8 7 V15 L1 11 Z" fill="#ffb428" stroke="#b84810" strokeWidth={0.7} /><path d="M8 7 L14 4 V10 L8 15 Z" fill="#e84828" /><rect x={8} y={7} width={7} height={8} fill="#f4f4f4" stroke="#333" strokeWidth={0.8} /><path d="M9.5 9.5 H13.5 M9.5 12.5 H13.5" stroke="#222" strokeWidth={1.3} /></>),
  full: (<><path d="M1 4 V1 H4 M12 1 H15 V4 M15 12 V15 H12 M4 15 H1 V12" fill="none" stroke="#223" strokeWidth={1.3} /><rect x={3.5} y={3.5} width={9} height={9} fill="#fff" stroke="#456" /><rect x={5} y={5.5} width={6} height={5} fill="#2a62c8" /></>),
  folder: (<><path d="M1 3 L2 2 H6 L7.5 4 H13 V7 H1 Z" fill="#f6cc58" stroke="#90681c" strokeWidth={0.900} /><path d="M1 14 L4 7 H16 L13 14 Z" fill="#ffd860" stroke="#90681c" strokeWidth={0.900} /><path d="M1 14 V4" stroke="#90681c" /></>),
  body: (
    <>
      <path d="M3 11 L7 8 L15 10 V13 L10 16 L3 14 Z" fill="#3b72d8" stroke="#18387c" strokeWidth={0.7} />
      <path d="M7 5 L11 4 L13 6 V11 L8 11 Z" fill="#86b0f0" stroke="#18387c" strokeWidth={0.7} />
      <path d="M8 2 H13 M13 0.5 V4" stroke="#222" strokeWidth={1.3} />
      <circle cx={4.5} cy={5} r={3.8} fill="#fff" fillOpacity={0.6} stroke="#cc1420" strokeWidth={1.7} /><path d="M2 7.5 L7 2.5" stroke="#cc1420" strokeWidth={1.7} />
    </>
  ),
  planeS: <path d="M2.5 1.5 L13.5 4 V15 L2.5 12.5 Z" fill="#f6faf5" stroke="#596159" />,
  sketchS: (<><path d="M0.500 1.5 H7.500 V7.500 H0.500 Z M0.500 9.5 H6 V15.500 H0.500 Z M8.500 9.500 H15.500 V15.500 H8.500 Z" fill="#fff" stroke="#222" /><path d="M6 10 L8 6 L14 1 L15.5 3 L9 8.5 Z" fill="#ffc828" stroke="#805000" strokeWidth={0.7} /><path d="M13 1.5 L14.5 0.5 L16 2 L15 3.5 Z" fill="#e02020" /></>),
  revolve: (<><path d="M2 3 C4 0.500 12 0.500 14 3 C16 6 14 8 12 9 C11 11 11 13 8 15 C5 13 5 11 4 9 C2 8 0 6 2 3 Z" fill="#f47820" stroke="#802000" strokeWidth={0.7} /><path d="M8 1.500 V15 C11 13 11 11 12 9 C14 8 16 6 14 3 C12 1.500 10 1.300 8 1.500 Z" fill="#3868d0" /><path d="M5 3.500 V10 M11 3.500 V10" stroke="#ffe060" strokeWidth={1.5} /></>),
  nSurf: (<><path d="M1 3 L6 1 L15 4 L13 8 L14 13 L8 15 L3 12 Z" fill="#b8c4f6" stroke="#8492d4" strokeWidth={0.6} /><path d="M3 7 C6 4 10 6 13 8 V11 C9 9 6 10 4 12 Z" fill="#8c9ee0" stroke="#6876c0" strokeWidth={0.6} /></>),
  pin: (<><path d="M2 12 L6 8" stroke="#111" strokeWidth={1.3} /><path d="M4 5 L7 2 L11 3 L11 7 L9 10 L4 9 Z" fill="#d8c018" stroke="#111" strokeWidth={1.2} /><path d="M7 4 L10 4.500 L8 8 Z" fill="#fff8a0" /></>),
};

const Icon = ({ n }: { n: string }) => (
  <svg className="h-6 w-6 shrink-0" viewBox="0 0 24 24" aria-hidden="true">{art[n]}</svg>
);
const Mini = ({ n }: { n: string }) => (
  <svg className="h-4 w-4 shrink-0" viewBox="0 0 16 16" aria-hidden="true">{small[n]}</svg>
);
const Down = () => (
  <svg className="h-[3px] w-[5px] shrink-0" viewBox="0 0 5 3" aria-hidden="true"><path d="M0 0 H5 L2.5 3 Z" fill="#000" /></svg>
);

/* ---------- toolbar parts ---------- */

const Grip = () => (
  <span className="flex w-2 shrink-0 justify-end pr-px">
    <span className="h-[26px] border-l-2 border-dotted border-[#a2a2a2]" />
  </span>
);

const Sep = ({ w = "w-[5px]" }: { w?: string }) => (
  <span className={`flex shrink-0 justify-center self-stretch py-px ${w}`}>
    <span className="border-r border-l border-r-white border-l-[#b4b4b4]" />
  </span>
);

const Tool = ({ n, w = "w-[31px]", on, off }: { n: string; w?: string; on?: boolean; off?: boolean }) => (
  <button
    type="button"
    aria-label={n}
    disabled={off}
    className={`flex h-[30px] shrink-0 items-center justify-center ${w} ${on ? "rounded-sm border border-[#5c5c5c] bg-white" : ""} ${off ? "opacity-85" : ""}`}
  >
    <Icon n={n} />
  </button>
);

const Arrow = ({ w = "w-[13px]" }: { w?: string }) => (
  <button type="button" aria-label="展开" className={`flex h-6 shrink-0 items-center justify-center ${w}`}>
    <Down />
  </button>
);

const More = ({ w = "w-[9px]" }: { w?: string }) => (
  <button type="button" aria-label="工具条选项" className={`flex shrink-0 items-end justify-center self-stretch pb-[6px] ${w}`}>
    <Down />
  </button>
);

const Group = ({ children, label, pad = "pr-1" }: { children: ReactNode; label: string; pad?: string }) => (
  <div role="toolbar" aria-label={label} className={`flex h-[34px] shrink-0 items-center border-t border-r border-b border-t-white border-r-[#b8b8b8] border-b-[#bcbcbc] ${pad}`}>
    {children}
  </div>
);

const Drop = ({ n, label }: { n: string; label: string }) => (
  <button type="button" className="flex h-6 shrink-0 items-center gap-1">
    <Mini n={n} />
    <span className="flex items-center">
      <Txt>{label}</Txt>
      <span className="flex w-[11px] justify-center"><Down /></span>
    </span>
  </button>
);

/* ---------- header ---------- */

const winBtn = "flex h-[18px] w-[18px] items-center justify-center rounded-[3px] border";

const WinIcon = ({ kind, color }: { kind: string; color: string }) => (
  <svg className="h-3 w-3" viewBox="0 0 12 12" fill="none" stroke={color} strokeWidth={2} aria-hidden="true">
    {kind === "min" && <path d="M1.5 10 H8" />}
    {kind === "max" && <path d="M3.5 3 V1.5 H11 V8 H9.5 M1.5 5 H8 V10.5 H1.5 Z" strokeWidth={1.5} />}
    {kind === "close" && <path d="M2 2 L10 10 M10 2 L2 10" strokeWidth={2.2} />}
  </svg>
);

function TitleBar() {
  return (
    <header className="flex h-[22px] shrink-0 items-center border-t border-black bg-linear-to-b from-[#77767c] from-0% via-[#55545a] via-30% to-[#1b1b1b] to-35% pr-[2px] pl-[3px] text-white">
      <svg className="h-4 w-4 shrink-0" viewBox="0 0 24 24" aria-hidden="true"><Nx /></svg>
      <h1 className="ml-[5px] whitespace-pre font-['Noto_Sans','Noto_Sans_CJK_SC',sans-serif] text-[13px]">NX 8.5 - 建模 - [920.prt （修改的）]</h1>
      <span className="mr-[27px] ml-auto font-['Open_Sans',sans-serif] text-[13px] font-extrabold">SIEMENS</span>
      <div className="flex gap-1">
        <button type="button" aria-label="最小化" className={`${winBtn} border-[#777] bg-linear-to-b from-[#77777a] to-[#303032]`}><WinIcon kind="min" color="#fff" /></button>
        <button type="button" aria-label="还原" className={`${winBtn} border-[#777] bg-linear-to-b from-[#77777a] to-[#303032]`}><WinIcon kind="max" color="#fff" /></button>
        <button type="button" aria-label="关闭" className={`${winBtn} border-[#e8907c] bg-linear-to-b from-[#f07a5c] to-[#dd3214]`}><WinIcon kind="close" color="#fff" /></button>
      </div>
    </header>
  );
}

const menus: [string, string][] = [
  ["文件", "F"], ["编辑", "E"], ["视图", "V"], ["插入", "S"], ["格式", "R"], ["工具", "T"], ["装配", "A"],
  ["信息", "I"], ["分析", "L"], ["首选项", "P"], ["窗口", "O"], ["GC 工具箱", ""], ["帮助", "H"],
];

function MenuBar() {
  return (
    <nav className="flex h-6 shrink-0 items-center border-b border-[#b9b9b9] bg-linear-to-b from-[#e9e9e9] to-[#dfdfdf] pr-[4px]">
      <span className="flex w-2 shrink-0 justify-end pr-px"><span className="h-[15px] border-l-2 border-dotted border-[#a2a2a2]" /></span>
      <Mini n="cubeApp" />
      <div className="ml-[6px] flex gap-[13px]">
        {menus.map(([t, k]) => (
          <button type="button" key={t} className="whitespace-nowrap">
            <Txt>{t}</Txt>
            {k && <span className="font-['DejaVu_Sans_Mono',monospace] text-[10px]">(<u>{k}</u>)</span>}
          </button>
        ))}
      </div>
      <div className="ml-auto flex gap-[2px]">
        {["min", "max", "close"].map((k) => (
          <button type="button" key={k} aria-label={k} className="flex h-[17px] w-[17px] items-center justify-center rounded-[4px] border border-[#8c8c8c] bg-linear-to-b from-white to-[#d9d9d9]">
            <WinIcon kind={k} color="#555" />
          </button>
        ))}
      </div>
    </nav>
  );
}

function Toolbars() {
  return (
    <>
      <div className="shrink-0 border-b-2 border-[#a5a5a5] bg-linear-to-b from-[#e2e2e2] to-[#cbcbcb]">
        <div className="flex h-[34px]">
          <Group label="标准">
            <Grip />
            <button type="button" className="flex w-[66px] shrink-0 items-center pl-[3px]">
              <Icon n="nx" />
              <span className="ml-1">开始</span>
              <span className="ml-[3px]"><Down /></span>
            </button>
            <Tool n="newDoc" /><Tool n="open" /><Tool n="save" />
            <Sep w="w-[7px]" />
            <Tool n="cut" /><Tool n="copy" /><Tool n="paste" /><Tool n="del" />
            <Sep />
            <Tool n="undo" /><Tool n="redo" />
            <Sep w="w-[7px]" />
            <button type="button" className="flex w-[94px] shrink-0 items-center gap-1 pl-[3px] whitespace-nowrap">
              <Icon n="finder" />命令查找器
            </button>
            <Tool n="datum" /><Arrow w="w-[15px]" /><More w="w-[7px]" />
          </Group>
          <Group label="视图">
            <Grip />
            <Tool n="fit" /><Arrow /><Tool n="datum" w="w-[30px]" /><Arrow /><Tool n="cube" w="w-[30px]" /><Arrow /><Tool n="square" w="w-[30px]" /><Arrow />
            <Sep />
            <Tool n="boxMark" /><Tool n="box" w="w-[32px]" /><More />
          </Group>
          <Group label="实用工具">
            <Grip />
            <Tool n="palette" w="w-[30px]" />
            <Sep />
            <Tool n="eye" /><Arrow />
            <Sep />
            <Tool n="measureCurve" /><Arrow /><Tool n="ruler" /><More />
          </Group>
        </div>
        <div className="flex h-[34px]">
          <Group label="草图">
            <Grip />
            <Tool n="sketch" />
            <button type="button" disabled className="flex w-[82px] shrink-0 items-center gap-[3px] pl-1 whitespace-nowrap text-[#939393]">
              <Icon n="flag" />完成草图
            </button>
            <Tool n="profile" w="w-[32px]" /><Tool n="line" /><Tool n="arc" /><Tool n="circle" /><Tool n="fillet" off /><Tool n="chamfer" off /><Tool n="rect" /><Tool n="hex" /><Tool n="spline" /><Tool n="ellipse" /><Tool n="plus" /><Tool n="offset" off />
            <Arrow />
            <Tool n="offset" off /><Tool n="pattern" off /><Tool n="mirrorCurve" off /><Tool n="intersect" off /><Tool n="derive" off /><Tool n="plane" off /><Tool n="planes" off /><Tool n="project" off />
            <Sep />
            <Tool n="trim" off /><Tool n="extend" off />
            <Sep w="w-[7px]" />
            <Tool n="constraint" off /><Arrow w="w-[11px]" /><Tool n="constraint" off />
            <Sep w="w-[7px]" />
            <Tool n="parallel" off /><Tool n="parallelAuto" off /><Arrow w="w-3" /><More />
          </Group>
        </div>
      </div>

      <div className="flex h-[26px] shrink-0 items-center border-b border-[#bdbdbd] bg-linear-to-b from-[#cdcdcd] to-[#dadada] pr-1 pl-[5px]">
        <label className="relative flex h-[17px] w-[110px] shrink-0 items-center rounded-[3px] border border-[#666] bg-white">
          <select aria-label="选择过滤器" className="h-full w-full appearance-none bg-transparent px-0 text-xs leading-none outline-none">
            <option>没有选择过滤器</option>
          </select>
          <span className="pointer-events-none absolute top-0 right-0 flex h-full w-[17px] items-center justify-center rounded-r-[2px] border border-[#2d5f9e] bg-linear-to-b from-[#e6f2fd] to-[#5ba0e6]">
            <svg className="h-[6px] w-[11px]" viewBox="0 0 11 6" aria-hidden="true"><path d="M0 0 H11 L5.5 6 Z" fill="#111" /></svg>
          </span>
        </label>
        <button type="button" aria-label="过滤" className="flex w-[28px] shrink-0 justify-center"><Mini n="filterChain" /></button>
        <Sep />
        {["filter1", "filter2", "filter3"].map((n) => (
          <button type="button" key={n} aria-label={n} className="flex w-[23px] shrink-0 justify-center"><Mini n={n} /></button>
        ))}
        <Sep w="w-[7px]" />
        {["eraserBox", "solidBox"].map((n) => (
          <button type="button" key={n} aria-label={n} className="flex w-[23px] shrink-0 justify-center"><Mini n={n} /></button>
        ))}
        <Sep w="w-[9px]" />
        <span className="w-[2px] shrink-0" />
        <button type="button" className="flex h-6 shrink-0 items-center gap-[7px]">
          <Mini n="wcs" />
          <span className="flex items-center font-['DejaVu_Sans_Mono',monospace] text-[10px]"><u>W</u>CS<span className="flex w-[11px] justify-center"><Down /></span></span>
        </button>
        <Sep w="w-[9px]" />
        <Drop n="curve" label="曲线1" />
        <Sep w="w-[10px]" />
        <Drop n="offset2" label="曲线2" />
        <Sep w="w-[9px]" />
        <Drop n="editCurve" label="编辑曲线" />
        <Sep w="w-[10px]" />
        <Drop n="surface" label="曲面1" />
        <span className="w-1 shrink-0" />
        <Drop n="surface2" label="曲面2" />
        <Sep w="w-[10px]" />
        <Drop n="editSurface" label="编辑曲面" />
        <span className="w-1 shrink-0" />
        <Drop n="form1" label="成型特征1" />
        <span className="w-1 shrink-0" />
        <Drop n="form2" label="成型特征2" />
        <Sep w="w-[10px]" />
        <Drop n="featEdit" label="特征编辑" />
        <span className="w-1 shrink-0" />
        <Drop n="sync" label="同步建模" />
        <span className="ml-auto flex self-stretch"><More /></span>
      </div>

      <div className="flex h-[22px] shrink-0 border-b border-[#a8a8a8] bg-[#dadada]">
        <div className="w-[634px] shrink-0 border-r border-[#b4b4b4]" />
        <div className="flex-1 border-r border-l border-r-[#b4b4b4] border-l-white" />
        <div className="w-[19px] border-r border-l border-r-[#b4b4b4] border-l-white" />
        <div className="w-[37px] border-r border-l border-r-[#b4b4b4] border-l-white" />
        <div className="flex w-[42px] items-center gap-1 pl-[3px]">
          <button type="button" aria-label="完成草图"><svg className="h-4 w-4" viewBox="0 0 24 24"><Flag /></svg></button>
          <button type="button" aria-label="全屏"><Mini n="full" /></button>
        </div>
      </div>
    </>
  );
}

/* ---------- navigator ---------- */

type Row = { text: string; icon: string; dim?: boolean; warn?: boolean };
const rows: Row[] = [
  { text: "体 (0)", icon: "body" },
  { text: "体 (1)", icon: "body" },
  { text: "固定基准平面 (2)", icon: "planeS" },
  { text: "草图 (3) “SKETCH_...", icon: "sketchS", warn: true },
  { text: "基准平面 (4)", icon: "planeS" },
  { text: "草图 (5) “SKETCH_...", icon: "sketchS" },
  { text: "回转 (6)", icon: "revolve", dim: true },
  { text: "体 (8)", icon: "body" },
  { text: "体 (9)", icon: "body", dim: true },
  { text: "体 (10)", icon: "body", dim: true },
  { text: "体 (11)", icon: "body" },
  { text: "草图 (12) “SKETCH...", icon: "sketchS" },
  { text: "草图 (13) “SKETCH...", icon: "sketchS" },
  { text: "N 边曲面 (14)", icon: "nSurf" },
  { text: "N 边曲面 (15)", icon: "nSurf" },
];

const sideTabs: { n: string; cls: string }[] = [
  { n: "asmTree", cls: "mt-[16px] h-[41px]" },
  { n: "mirror", cls: "mt-[1px] h-[41px]" },
  { n: "partTree", cls: "h-[44px]" },
  { n: "books", cls: "h-[40px]" },
  { n: "info", cls: "mt-[13px] h-[41px]" },
  { n: "web", cls: "mt-[14px] h-[40px]" },
  { n: "clock", cls: "mt-[14px] h-[40px]" },
  { n: "roles", cls: "mt-[2px] h-[41px]" },
  { n: "wand", cls: "mt-[1px] h-[36px]" },
];

const Stepper = ({ d, label, off }: { d: string; label: string; off?: boolean }) => (
  <button type="button" aria-label={label} className="flex h-[16px] w-4 shrink-0 items-center justify-center border border-[#f6f6f6] border-r-[#777] border-b-[#777] bg-[#d6d6d6]">
    <svg className="h-[6px] w-2" viewBox="0 0 10 8" aria-hidden="true"><path d={d} fill={off ? "#aaa" : "#333"} /></svg>
  </button>
);

function SideBar() {
  return (
    <div className="flex w-[33px] shrink-0 flex-col items-end border-r border-[#777] bg-linear-to-r from-[#b9b9b9] to-[#9d9d9d]">
      {sideTabs.map(({ n, cls }) => (
        <button
          type="button"
          key={n}
          aria-label={n}
          className={`flex shrink-0 items-center justify-center rounded-l-[4px] border border-r-0 border-[#6f6f6f] ${cls} ${n === "partTree" ? "w-7 bg-[#ebebeb]" : "w-[26px] bg-linear-to-b from-[#e2e2e2] to-[#c4c4c4]"}`}
        >
          <Icon n={n} />
        </button>
      ))}
      <div className="mt-[3px] mr-[6px] flex flex-col">
        <Stepper label="首页" off d="M0 0 H10 V2 H0 Z M5 2 L10 8 H0 Z" />
        <Stepper label="上移" off d="M5 2 L10 7 H0 Z" />
        <Stepper label="下移" d="M0 2 H10 L5 7 Z" />
        <Stepper label="末页" d="M0 0 H10 L5 5 Z M0 6 H10 V8 H0 Z" />
      </div>
    </div>
  );
}

const Check = ({ label, warn }: { label: string; warn?: boolean }) => (
  <label className="relative flex h-3 w-3 shrink-0">
    <input type="checkbox" defaultChecked aria-label={label} className="peer h-3 w-3 appearance-none border border-black bg-white" />
    <svg className="pointer-events-none absolute inset-0 hidden h-3 w-3 peer-checked:block" viewBox="0 0 12 12" aria-hidden="true">
      <path d="M2.500 6 L5 9 L10 3" fill="none" stroke="#10b830" strokeWidth={2.4} />
    </svg>
    {warn && (
      <svg className="absolute -top-[2px] -left-[2px] h-[10px] w-[10px]" viewBox="0 0 10 10" aria-hidden="true">
        <path d="M5 0 L10 9.5 H0 Z" fill="#ffe020" stroke="#b89000" strokeWidth={0.6} /><path d="M5 3 V6 M5 7 V8.5" stroke="#000" strokeWidth={1.2} />
      </svg>
    )}
  </label>
);

const rowCls = "h-5 border-b border-[#e4e4e4] odd:bg-[#f6f6f6] even:bg-white";
const Branch = () => <span className="h-0 w-2 shrink-0 border-t border-dotted border-[#999]" />;

function Navigator() {
  return (
    <section className="flex w-[293px] shrink-0 flex-col border-t border-r border-t-white border-r-[#777] bg-[#ebebeb] pr-[11px] pl-[9px]">
      <div className="flex h-[30px] shrink-0 items-center gap-[10px] pl-1">
        <Mini n="pin" />
        <h2 className="text-[13px] font-bold">部件导航器</h2>
      </div>
      <div className="flex h-[378px] shrink-0 flex-col border-2 border-[#777] border-t-[#6a6a6a] border-l-[#6a6a6a] bg-[#f2f2f2]">
        <div className="flex min-h-0 flex-1">
          <div className="min-w-0 flex-1 overflow-hidden">
            <table className="w-full table-fixed border-collapse">
              <thead>
                <tr className="h-4 border-b border-[#a0a0a0] bg-linear-to-b from-[#f4f4f4] to-[#d6d9da] text-left leading-[15px]">
                  <th className="w-[200px] border-r border-[#a8a8a8] p-0 pl-[6px] font-normal">
                    <span className="flex items-center gap-[14px]">名称<svg className="h-[6px] w-[10px]" viewBox="0 0 10 6" aria-hidden="true"><path d="M5 0 L10 6 H0 Z" fill="#111" /></svg></span>
                  </th>
                  <th className="p-0 pl-[5px] font-normal">附注</th>
                </tr>
              </thead>
              <tbody>
                <tr className={rowCls}>
                  <td className="border-r border-[#e4e4e4] p-0">
                    <span className="flex h-[19px] items-center pl-[9px]">
                      <span className="h-full border-l border-dotted border-[#999]" /><Branch />
                      <span className="relative ml-px flex"><Mini n="folder" /><span className="absolute -top-[2px] right-0 h-[4px] w-[7px] border-y border-[#222288]" /></span>
                      <span className="ml-[3px]">用户表达式</span>
                    </span>
                  </td>
                  <td className="p-0" />
                </tr>
                <tr className={rowCls}>
                  <td className="border-r border-[#e4e4e4] p-0">
                    <span className="flex h-[19px] items-center pl-1">
                      <button type="button" aria-label="折叠" className="flex h-[9px] w-[9px] shrink-0 items-center justify-center border border-[#999] bg-white"><span className="h-px w-[5px] bg-[#333]" /></button>
                      <span className="h-0 w-[5px] border-t border-dotted border-[#999]" />
                      <span className="ml-px flex"><Mini n="folder" /></span>
                      <span className="ml-[3px]">模型历史记录</span>
                    </span>
                  </td>
                  <td className="p-0" />
                </tr>
                {rows.map((r) => (
                  <tr key={r.text} className={rowCls}>
                    <td className="border-r border-[#e4e4e4] p-0">
                      <span className={`flex h-[19px] items-center pl-7 ${r.dim ? "text-[#a0a0a0]" : "text-[#222]"}`}>
                        <span className="h-full border-l border-dotted border-[#999]" /><Branch />
                        <span className="ml-[3px] flex"><Check label={r.text} warn={r.warn} /></span>
                        <span className="ml-[2px] flex"><Mini n={r.icon} /></span>
                        <span className="ml-[2px]"><Txt>{r.text}</Txt></span>
                      </span>
                    </td>
                    <td className="p-0" />
                  </tr>
                ))}
              </tbody>
            </table>
          </div>
          <div className="flex w-4 shrink-0 flex-col">
            <div className="h-4 shrink-0 border-b border-[#a0a0a0] bg-linear-to-b from-[#f4f4f4] to-[#d6d9da]" />
            <svg className="mt-[6px] ml-1 h-1 w-[7px] shrink-0" viewBox="0 0 7 4" aria-hidden="true"><path d="M3.5 0 L7 4 H0 Z" fill="#222" /></svg>
            <div className="mt-[49px] flex h-[235px] w-[15px] flex-col items-center justify-center gap-[2px] rounded-[2px] border border-[#858585] bg-linear-to-r from-[#f4f4f4] to-[#c9cacc]">
              <i className="h-px w-[7px] bg-[#555]" /><i className="h-px w-[7px] bg-[#555]" /><i className="h-px w-[7px] bg-[#555]" />
            </div>
            <svg className="mt-auto mb-[6px] ml-1 h-1 w-[7px]" viewBox="0 0 7 4" aria-hidden="true"><path d="M0 0 H7 L3.5 4 Z" fill="#222" /></svg>
          </div>
        </div>
        <div className="flex h-[17px] shrink-0 items-center border-t border-[#e4e4e4] bg-[#f2f2f2]">
          <svg className="ml-[6px] h-[7px] w-1" viewBox="0 0 4 7" aria-hidden="true"><path d="M4 0 V7 L0 3.5 Z" fill="#222" /></svg>
          <div className="ml-2 flex h-[15px] w-[181px] items-center justify-center gap-[2px] rounded-[2px] border border-[#858585] bg-linear-to-b from-[#f0f0f0] to-[#c9cacc]">
            <i className="h-[7px] w-px bg-[#555]" /><i className="h-[7px] w-px bg-[#555]" /><i className="h-[7px] w-px bg-[#555]" />
          </div>
          <svg className="mr-[22px] ml-auto h-[7px] w-1" viewBox="0 0 4 7" aria-hidden="true"><path d="M0 0 V7 L4 3.5 Z" fill="#222" /></svg>
        </div>
      </div>
      <div className="flex h-[12px] shrink-0 items-center gap-1">
        <span className="h-px flex-1 bg-[#b0b0b0]" />
        <span className="h-[6px] w-[49px] border border-[#eee] border-r-[#888] border-b-[#888] bg-[#d4d4d4]" />
        <span className="h-px flex-1 bg-[#b0b0b0]" />
      </div>
      {["相依性", "细节", "预览"].map((t) => (
        <button type="button" key={t} className="flex h-[23px] shrink-0 items-stretch border-t border-r border-b border-t-white border-r-[#999] border-b-[#8e8e8e] bg-linear-to-b from-[#f6f6f6] to-[#d3d5d6] text-left text-[13px] leading-5 font-bold">
          <span className="flex-1 pl-[6px]">{t}</span>
          <span className="flex w-[22px] items-center justify-center border-l border-[#aaa]">
            <svg className="h-[9px] w-3" viewBox="0 0 12 9" aria-hidden="true"><path d="M1.5 0.5 L6 7.5 L10.5 0.5" fill="none" stroke="#5a5a5a" strokeWidth={2.4} /></svg>
          </span>
        </button>
      ))}
    </section>
  );
}

/* ---------- model view ---------- */

const outline =
  "M804.5 332 C804.5 350 804.5 364 797 377 C792 385 783 392 774 400 C758 414 748.5 434 748 460 L855.5 522 L963 460 C962.5 434 953 414 937 400 C928 392 919 385 914 377 C906.5 364 906.5 350 906.5 332";

function Viewport() {
  return (
    <main className="min-w-0 flex-1 border-t-2 border-r border-b border-l-2 border-[#f3a04c] bg-linear-to-b from-[#b6b7b9] from-0% via-[#d6d7d8] via-48% to-[#e6e8ea] to-80%">
      <svg className="h-full w-full" viewBox="328 166 1037 492" preserveAspectRatio="xMidYMid slice" role="img" aria-label="模型视图">
        <defs>
          <linearGradient id="cyl" x1="0" x2="1">
            <stop offset="0" stopColor="#ac6600" /><stop offset="0.2" stopColor="#9c5b00" /><stop offset="0.4" stopColor="#854d00" /><stop offset="0.65" stopColor="#9c5c00" /><stop offset="0.85" stopColor="#bf7200" /><stop offset="1" stopColor="#d48000" />
          </linearGradient>
          <linearGradient id="skinLeft" x1="0.4" x2="0.7" y1="0" y2="1">
            <stop offset="0" stopColor="#647c84" /><stop offset="0.55" stopColor="#5f7984" /><stop offset="1" stopColor="#536873" />
          </linearGradient>
          <linearGradient id="skinRight" x1="0.4" x2="0.4" y1="0" y2="1">
            <stop offset="0" stopColor="#5d747c" /><stop offset="0.45" stopColor="#7896a6" /><stop offset="0.7" stopColor="#7391a0" /><stop offset="1" stopColor="#627b86" />
          </linearGradient>
          <radialGradient id="glow"><stop offset="0" stopColor="#8eb6ca" /><stop offset="0.35" stopColor="#8eb6ca" stopOpacity="0.6" /><stop offset="0.7" stopColor="#8eb6ca" stopOpacity="0.16" /><stop offset="1" stopColor="#8eb6ca" stopOpacity="0" /></radialGradient>
          <radialGradient id="dusk"><stop offset="0" stopColor="#36464e" stopOpacity="0.85" /><stop offset="0.5" stopColor="#36464e" stopOpacity="0.45" /><stop offset="1" stopColor="#36464e" stopOpacity="0" /></radialGradient>
          <clipPath id="skinClip"><path d={`${outline} A51 31 0 0 1 804.5 332 Z`} /></clipPath>
        </defs>
        <path d="M1035.5 160 V347 M1035.5 411 V664 M320 379.5 H1003 M1067 379.5 H1400" stroke="#1a1a1a" strokeWidth={1} />
        <path d="M748 460 L855.5 522 V646 L748 585 Z" fill="#a26000" />
        <path d="M963 460 L855.5 522 V646 L963 585 Z" fill="#c27400" />
        <path d="M748 458 V585 L855.5 646 L963 585 V458" fill="none" stroke="#333" />
        <g clipPath="url(#skinClip)">
          <rect x={740} y={325} width={116} height={200} fill="url(#skinLeft)" />
          <rect x={855} y={325} width={116} height={200} fill="url(#skinRight)" />
          <ellipse cx={848} cy={373} rx={56} ry={34} fill="url(#dusk)" />
          <ellipse cx={836} cy={398} rx={34} ry={26} fill="url(#dusk)" opacity={0.6} />
          <ellipse cx={782} cy={402} rx={38} ry={30} fill="url(#glow)" opacity={0.6} />
          <ellipse cx={928} cy={402} rx={56} ry={44} fill="url(#glow)" opacity={0.9} />
          <ellipse cx={859} cy={438} rx={46} ry={52} fill="url(#glow)" opacity={0.95} />
          <path d="M797 379.5 H914" stroke="#9aa48a" />
        </g>
        <path d={outline} fill="none" stroke="#333" />
        <path d={outline} fill="none" stroke="#3c62ff" strokeDasharray="5 1" strokeWidth={1.2} />
        <path d="M855.5 365 V518" stroke="#3a68b4" />
        <path d="M805 211 V336 A50.5 29 0 0 0 906 336 V211 Z" fill="url(#cyl)" />
        <path d="M805 336 A50.5 29 0 0 0 906 336" fill="none" stroke="#3a5cf0" strokeWidth={1.3} />
        <ellipse cx={855.5} cy={211.5} rx={50.5} ry={29} fill="#ffcb05" stroke="#333" />
        <g fill="#e080b0" fillOpacity={0.22}>
          <path d="M742.5 455.5 H748 V585 L754 588.5 H742.5 Z M968.5 455.5 H963 V585 L957 588.5 H968.5 Z" />
          <path d="M750 455.5 H742.5 V588.5 H754 M961 455.5 H968.5 V588.5 H957" fill="none" stroke="#d0649c" />
        </g>
        <path d="M855.5 517 V654" stroke="#c4607a" />
        <path d="M855.5 290 L853.5 304 L855.5 332 L857.5 304 Z" fill="#5878c4" />
        <path d="M858 333.5 L879 318.500 L896 312.5 L884 321 Z" fill="#c4f0cc" stroke="#6aa080" strokeWidth={0.5} />
        <path d="M858 337 L882 348 L895 358 L879 350 Z" fill="#f4a0a0" stroke="#c05050" strokeWidth={0.5} />
        <g fontFamily="DejaVu Sans, sans-serif" fontSize={11}>
          <text x={858} y={289} fill="#2848d0">ZC</text><text x={880} y={309} fill="#4c9410">YC</text><text x={879} y={372} fill="#d83838">XC</text>
        </g>
        <path d="M369 600 L383 590 L396 597 V612 L383 620 L369 613 Z" fill="#c9cbcb" stroke="#aaa" />
        <path d="M383 590 V620 M369 597 L396 612 M369 613 L396 597" stroke="#aaa" />
        <path d="M372 611 L392 599" stroke="#90b898" strokeWidth={2} />
        <path d="M370 612 V592" stroke="#0c2ca8" strokeWidth={2.2} /><path d="M367 595 H373 L370 587 Z" fill="#0c2ca8" />
        <path d="M371 613 L388 622" stroke="#c81818" strokeWidth={2.2} /><path d="M387 618 L392 625 L384 623 Z" fill="#c81818" />
        <circle cx={369.5} cy={612.5} r={3.5} fill="#b4b4b4" stroke="#888" strokeWidth={0.5} />
        <g fontFamily="DejaVu Sans, sans-serif" fontSize={11}>
          <text x={366} y={588} fill="#3858c8">Z</text><text x={391} y={602} fill="#6cb070">Y</text><text x={391} y={631} fill="#d84848">X</text>
        </g>
      </svg>
    </main>
  );
}

/* ---------- footer ---------- */

function Footer() {
  return (
    <footer className="shrink-0 bg-linear-to-b from-[#e4e4e4] to-[#cacaca] pt-px">
      <div className="flex h-[34px]">
        <div className="w-[67px] shrink-0 border-r border-b border-[#c4c4c4]" />
        <Group label="捕捉点" pad="pr-[3px]">
          <Grip />
          <Tool n="wcsList" /><Tool n="layerList" /><Tool n="layerMove" /><Tool n="layerCopy" /><Tool n="transform" /><Tool n="csys" /><Tool n="csysRotate" /><Tool n="csysOrient" /><Tool n="csysSave" />
          <Tool n="csysLight" on /><Tool n="midLine" on /><Tool n="ctrl" /><Tool n="tangent" /><Tool n="center" on /><Tool n="quadrant" /><Tool n="point" on /><Tool n="onCurve" on /><Tool n="onFace" /><Tool n="ruler" /><Tool n="angle" /><More />
        </Group>
      </div>
      <div className="flex h-[34px]">
        <Group label="装配">
          <Grip />
          <Tool n="asmWin" w="w-[30px]" /><Tool n="asmAdd" /><Tool n="asmMove" /><Tool n="mirror" />
          <Sep w="w-[7px]" />
          <Tool n="asm" /><More />
        </Group>
      </div>
    </footer>
  );
}

function SpeedBall() {
  return (
    <aside className="absolute right-[250px] -bottom-px flex h-[50px] w-[128px] items-center">
      <div className="ml-[22px] flex h-[39px] w-[104px] items-center rounded-r-full border border-[#a0a0a0] bg-linear-to-b from-[#f6f6f6] to-[#dcdcdc] pl-[28px]">
        <svg className="h-[26px] w-[7px] shrink-0" viewBox="0 0 7 26" aria-hidden="true">
          <path d="M3.5 0 L7 4 H4.5 V8 H2.5 V4 H0 Z" fill="#e85838" /><path d="M3.5 26 L7 22 H4.5 V18 H2.5 V22 H0 Z" fill="#20a050" />
        </svg>
        <div className="ml-[13px] font-['Noto_Sans',sans-serif] text-[10px] leading-[15px] text-black"><p>0.1K/s</p><p>0.1K/s</p></div>
        <button type="button" aria-label="加速" className="relative ml-[3px] flex h-[17px] w-[17px] shrink-0 items-center justify-center rounded-full bg-[#2474dc]">
          <svg className="h-[10px] w-[10px]" viewBox="0 0 10 10" aria-hidden="true"><path d="M5 1 V9 M1 5 H9" stroke="#fff" strokeWidth={1.6} /></svg>
          <span className="absolute -top-[2px] -right-[2px] h-2 w-2 rounded-full border border-[#d05050] bg-[#5c6a84]" />
        </button>
      </div>
      <div className="absolute top-[1px] left-0 flex h-12 w-12 items-center justify-center rounded-full border-[3px] border-[#f4f4f4] bg-linear-to-b from-[#0a6c4a] from-0% via-[#128a58] via-45% to-[#4ccc58] to-46% font-['Liberation_Sans',sans-serif] text-sm text-white shadow-[0_0_2px_1px_#777]">
        57%
      </div>
    </aside>
  );
}

function Watermark() {
  return (
    <div className="pointer-events-none absolute right-[26px] bottom-[12px] flex items-center gap-[9px] text-white">
      <svg className="h-[82px] w-[72px] shrink-0" viewBox="0 0 72 82" aria-hidden="true">
        <g fillOpacity={0.65}>
          <path d="M36 0 L0 20 V28 C14 20 34 18 48 26 L56 30 L50 8 Z" fill="#aee0f6" />
          <path d="M50 8 C58 20 60 40 54 56 L72 44 V20 Z" fill="#45bdf0" />
          <path d="M72 42 C64 56 48 66 30 66 L36 82 L72 62 Z" fill="#4db0e4" />
          <path d="M0 28 C6 20 24 16 56 30 L52 34 L36 24 L17 34 V52 L0 62 Z" fill="#72c6ee" />
          <path d="M0 62 L17 50 L36 62 L54 56 L36 66 V82 Z" fill="#7accee" />
          <path d="M36 24 L20 34 V52 L36 60 L52 52 V34 Z" fill="#38a8e4" />
        </g>
        <path d="M20 34 L36 43 L52 34 M36 43 V60 M0 28 C16 18 38 18 56 31 M50 8 C60 24 60 42 52 56 M72 42 C60 60 42 68 24 64 M17 28 C14 48 22 70 36 82" fill="none" stroke="#eef7fb" strokeOpacity={0.6} strokeWidth={1.3} />
      </svg>
      <div className="w-[176px] opacity-60">
        <p className="flex items-center justify-between font-['Liberation_Sans','Noto_Sans_CJK_SC',sans-serif] leading-[42px] font-bold whitespace-nowrap">
          <span className="text-[46px]">3D</span>
          <span className="text-[38px]">世界网</span>
        </p>
        <p className="font-['DejaVu_Sans',sans-serif] text-[17px] leading-5 whitespace-nowrap">WWW.3DSJW.COM</p>
      </div>
    </div>
  );
}

export default function App() {
  return (
    <div className="relative flex h-screen min-w-fit flex-col overflow-hidden bg-[#d8d8d8] font-['Noto_Sans_CJK_SC',sans-serif] text-xs leading-4 text-black select-none">
      <TitleBar />
      <MenuBar />
      <Toolbars />
      <div className="flex min-h-0 flex-1">
        <SideBar />
        <Navigator />
        <Viewport />
      </div>
      <Footer />
      <SpeedBall />
      <Watermark />
    </div>
  );
}
